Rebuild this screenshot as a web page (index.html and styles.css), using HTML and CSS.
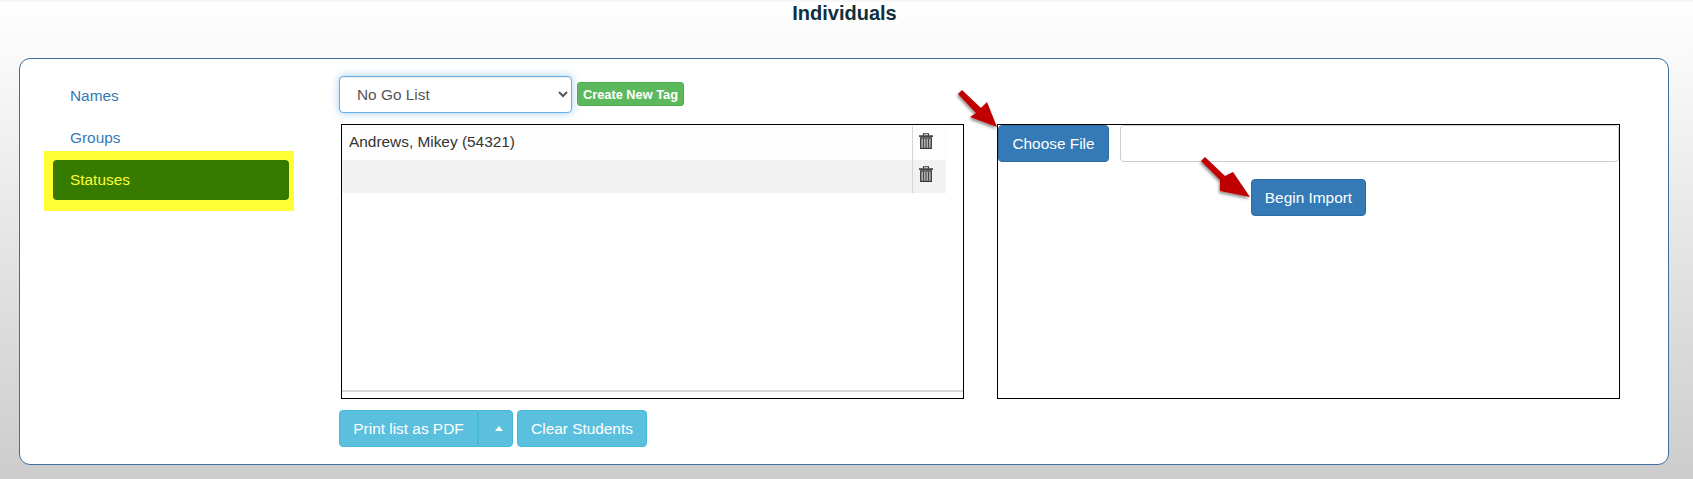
FILE: index.html
```html
<!DOCTYPE html>
<html lang="en">
<head>
    <meta charset="UTF-8">
    <title>Individuals</title>
    <link rel="stylesheet" href="styles.css">
</head>
<body>
<h1 class="title">Individuals</h1>
<div class="card">
    <ul class="side-nav">
        <li><a href="#">Names</a></li>
        <li><a href="#">Groups</a></li>
        <li class="highlight"><a href="#" class="active">Statuses</a></li>
    </ul>
    <div class="content">
        <div class="tag-row">
            <select class="tag-select">
                <option>No Go List</option>
            </select>
            <button class="btn btn-new-tag">Create New Tag</button>
        </div>
        <div class="boxes">
            <div class="box list-box">
                <table class="students">
                    <tr>
                        <td class="name">Andrews, Mikey (54321)</td>
                        <td class="del">
                            <svg class="trash" viewBox="0 0 14 16" width="14" height="16">
                                <path d="M4.500 2.500V.7h5v1.800" fill="none" stroke="#333" stroke-width="1.100"/>
                                <rect x="0" y="2.300" width="14" height="1.600" fill="#333"/>
                                <path d="M1.700 4.800h10.600v10.500H1.700z" fill="#b0b0b0" stroke="#333" stroke-width="1.200"/>
                                <path d="M4.500 5.500v9.200M7 5.500v9.200M9.500 5.500v9.200" stroke="#444" stroke-width="1"/>
                            </svg>
                        </td>
                    </tr>
                    <tr>
                        <td class="name"></td>
                        <td class="del">
                            <svg class="trash trash-low" viewBox="0 0 14 16" width="14" height="16">
                                <path d="M4.500 2.500V.7h5v1.800" fill="none" stroke="#333" stroke-width="1.100"/>
                                <rect x="0" y="2.300" width="14" height="1.600" fill="#333"/>
                                <path d="M1.700 4.800h10.600v10.500H1.700z" fill="#b0b0b0" stroke="#333" stroke-width="1.200"/>
                                <path d="M4.500 5.500v9.200M7 5.500v9.200M9.500 5.500v9.200" stroke="#444" stroke-width="1"/>
                            </svg>
                        </td>
                    </tr>
                </table>
                <div class="scroll-line"></div>
            </div>
            <div class="box import-box">
                <div class="file-row">
                    <button class="btn btn-blue">Choose File</button>
                    <input type="text" class="file-name" value="">
                </div>
                <div class="import-row">
                    <button class="btn btn-blue">Begin Import</button>
                </div>
            </div>
        </div>
        <div class="actions">
            <div class="split">
                <button class="btn btn-info split-main">Print list as PDF</button>
                <button class="btn btn-info split-caret"><span class="caret"></span></button>
            </div>
            <button class="btn btn-info btn-clear">Clear Students</button>
        </div>
    </div>
</div>
<svg class="arrows" width="1693" height="479" viewBox="0 0 1693 479">
    <defs>
        <filter id="arrow-shadow" x="-30%" y="-30%" width="160%" height="160%">
            <feDropShadow dx="-1" dy="2" stdDeviation="1.500" flood-color="#000" flood-opacity="0.450"/>
        </filter>
    </defs>
    <g fill="#c00000" filter="url(#arrow-shadow)">
        <polygon points="962,90 958,94 976,113 970,117 997,127 987,102 981,108"/>
        <polygon points="1205,157 1201,161 1220,180 1220,191 1250,197 1233,172 1225,176"/>
    </g>
</svg>
</body>
</html>
```

FILE: styles.css
```css
html, body {
    margin: 0;
    padding: 0;
    height: 479px;
    overflow: hidden;
}

body {
    position: relative;
    background: linear-gradient(#ffffff, #cccccc);
    font-family: "Liberation Sans", Arial, sans-serif;
    font-size: 15.400px;
    color: #333;
}

.title {
    margin: 0;
    height: 58px;
    padding: 1px 4px 0 0;
    border-top: 2px solid #f6f6f6;
    box-sizing: border-box;
    font-size: 20px;
    line-height: 20px;
    font-weight: bold;
    text-align: center;
    color: #0f2f3c;
}

.card {
    display: flex;
    box-sizing: border-box;
    width: 1650px;
    height: 407px;
    margin-left: 19px;
    padding-top: 17px;
    border: 1px solid #3e6f9e;
    border-radius: 11px;
    background: #fff;
}

.side-nav {
    list-style: none;
    width: 250px;
    margin: 0 0 0 24px;
    padding: 0;
}

.side-nav li {
    height: 42px;
    padding: 0 5px 0 9px;
    box-sizing: border-box;
}

.side-nav a {
    display: block;
    height: 40px;
    padding-left: 17px;
    line-height: 40px;
    border-radius: 4px;
    color: #337ab7;
    text-decoration: none;
}

.side-nav .highlight {
    height: 60px;
    margin-top: -9px;
    padding-top: 9px;
    background: #ffff33;
}

.side-nav a.active {
    background: #367a00;
    color: #ffff33;
}

.content {
    width: 1281px;
    margin-left: 45px;
}

.tag-row {
    display: flex;
    align-items: center;
    gap: 5px;
    height: 37px;
}

.tag-select {
    width: 233px;
    height: 37px;
    padding-left: 13px;
    border: 1px solid #66afe9;
    border-radius: 4px;
    box-shadow: inset 0 1px 1px rgba(0,0,0,.075), 0 0 8px rgba(102,175,233,.6);
    background: #fff;
    font: 15.400px "Liberation Sans", Arial, sans-serif;
    color: #555;
    outline: none;
}

.btn {
    height: 37px;
    padding: 0;
    border: 1px solid transparent;
    border-radius: 4px;
    font: 15.400px "Liberation Sans", Arial, sans-serif;
    color: #fff;
}

.btn-new-tag {
    width: 107px;
    height: 24px;
    margin-top: -1px;
    border-color: #4cae4c;
    border-radius: 3px;
    background: #5cb85c;
    font-size: 12.800px;
    font-weight: bold;
}

.btn-blue {
    background: #337ab7;
    border-color: #2e6da4;
}

.btn-info {
    background: #5bc0de;
    border-color: #46b8da;
}

.boxes {
    display: flex;
    gap: 33px;
    margin: 11px 0 0 2px;
}

.box {
    box-sizing: border-box;
    width: 623px;
    height: 275px;
    border: 1px solid #000;
}

.list-box {
    position: relative;
}

.students {
    width: 604px;
    margin-top: 1px;
    border-collapse: collapse;
    table-layout: fixed;
}

.students tr {
    height: 34px;
    background: #fdfdfd;
}

.students tr + tr {
    height: 33px;
    background: #f2f2f2;
}

.students td {
    padding: 0;
}

.students .name {
    padding: 0 0 3px 7px;
    color: #333;
}

.students .del {
    width: 34px;
    border-left: 1px solid #d5d5d5;
    padding-left: 6px;
    box-sizing: border-box;
}

.trash {
    display: block;
    margin-bottom: 4px;
}

.trash-low {
    margin-bottom: 6px;
}

.scroll-line {
    position: absolute;
    left: 0;
    right: 0;
    bottom: 6px;
    height: 2px;
    background: #d8d8d8;
}

.file-row {
    display: flex;
    gap: 11px;
}

.file-row .btn {
    width: 111px;
    flex: none;
}

.file-name {
    flex: 1;
    height: 37px;
    box-sizing: border-box;
    padding: 0 12px;
    border: 1px solid #ccc;
    border-radius: 4px;
    background: #fff;
    outline: none;
}

.import-row {
    margin: 17px 0 0 253px;
}

.import-row .btn {
    width: 115px;
}

.actions {
    display: flex;
    gap: 4px;
    margin-top: 11px;
}

.split {
    display: flex;
}

.split-main {
    width: 139px;
    border-radius: 4px 0 0 4px;
}

.split-caret {
    width: 35px;
    padding-left: 6px;
    border-left: 1px solid #46b8da;
    border-radius: 0 4px 4px 0;
}

.btn-clear {
    width: 130px;
}

.caret {
    display: block;
    width: 0;
    height: 0;
    margin: 0 auto;
    border-left: 4px solid transparent;
    border-right: 4px solid transparent;
    border-bottom: 5px solid #fff;
}

.arrows {
    position: absolute;
    left: 0;
    top: 0;
    pointer-events: none;
}
```
